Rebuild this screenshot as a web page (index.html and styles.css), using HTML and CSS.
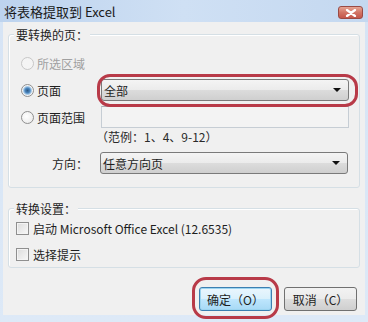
FILE: index.html
```html
<!DOCTYPE html>
<html lang="zh">
<head>
<meta charset="utf-8">
<link rel="stylesheet" href="styles.css">
</head>
<body>
<div class="window">
  <div class="titlebar">
    <span class="title">将表格提取到 Excel</span>
    <span class="close"><svg width="12" height="8" viewBox="0 0 12 8"><path d="M2 1 L10 7 M10 1 L2 7" stroke="#fff" stroke-width="2.2" stroke-linecap="round"/></svg></span>
  </div>
  <div class="client">
    <div class="group g1">
      <div class="legend">要转换的页：</div>
      <div class="row r1">
        <span class="radio disabled"></span><span class="lbl dim">所选区域</span>
      </div>
      <div class="row r2">
        <span class="radio checked"></span><span class="lbl w-lbl">页面</span>
        <div class="select hl"><span>全部</span><span class="arrow"></span></div>
      </div>
      <div class="row r3">
        <span class="radio"></span><span class="lbl w-lbl">页面范围</span>
        <div class="input"></div>
      </div>
      <div class="row r4"><span class="example">（范例：1、4、9-12）</span></div>
      <div class="row r5">
        <span class="dir-lbl">方向：</span>
        <div class="select"><span>任意方向页</span><span class="arrow"></span></div>
      </div>
    </div>
    <div class="group g2">
      <div class="legend">转换设置：</div>
      <div class="row c1"><span class="check"></span><span class="lbl">启动 Microsoft Office Excel (12.6535)</span></div>
      <div class="row c2"><span class="check"></span><span class="lbl">选择提示</span></div>
    </div>
    <div class="buttons">
      <div class="btn ok hl2">确定（O）</div>
      <div class="btn">取消（C）</div>
    </div>
  </div>
</div>
</body>
</html>
```
FILE: styles.css
```css
html, body { margin: 0; padding: 0; }
body {
  width: 368px; height: 322px; overflow: hidden;
  font-family: "Microsoft YaHei", "Noto Sans CJK SC", "Noto Sans", sans-serif;
  font-size: 12px; color: #1e1e1e;
}
.window {
  width: 368px; height: 322px;
  background: linear-gradient(to bottom, #c3d7ef 0px, #d6e4f5 22px, #dde9f7 100%);
  display: flex; flex-direction: column;
  box-sizing: border-box;
}
.titlebar {
  height: 22px; flex: none;
  display: flex; align-items: flex-start; justify-content: space-between;
  padding: 0 5px 0 4px;
  background: linear-gradient(to right, #bdd3ee 0%, #cfe0f4 50%, #c4d8f0 100%);
}
.title { font-size: 13px; color: #1a1a1a; line-height: 24px; }
.close {
  width: 25px; height: 13px; margin-top: 6px;
  border-radius: 3px; border: 1px solid #9a4a44;
  background: linear-gradient(to bottom, #e6a494 0%, #d27565 50%, #c4564a 100%);
  display: flex; align-items: center; justify-content: center;
  box-sizing: border-box;
}
.client {
  margin: 0 3px 7px 3px; flex: 1;
  background: #f0f0f0;
  padding: 12px 5px 0 5px;
  display: flex; flex-direction: column;
}
.group {
  position: relative;
  border: 1px solid #d5dfe5;
  border-radius: 3px;
  box-shadow: inset 1px 1px 0 #fff;
  display: flex; flex-direction: column;
}
.g1 { height: 154px; padding: 0 0 0 9px; box-sizing: border-box; }
.g2 { height: 60px; margin-top: 20px; padding: 0 0 0 7px; box-sizing: border-box; }
.legend {
  position: absolute; left: 5px; top: -9px;
  background: #f0f0f0; padding: 0 2px; line-height: 17px;
  font-size: 12px;
}
.row { display: flex; align-items: center; }
.r1 { margin-top: 19px; height: 18px; }
.r2 { margin-top: 7px; height: 22px; }
.r3 { margin-top: 5px; height: 22px; }
.r4 { height: 16px; padding-left: 78px; margin-top: 0px; }
.r5 { margin-top: 8px; height: 22px; }
.lbl { margin-left: 3px; }
.dim { color: #a0a0a0; }
.w-lbl { width: 64px; }
.radio {
  width: 11px; height: 11px; border-radius: 50%;
  border: 1px solid #8f8f8f; background: radial-gradient(circle at 40% 40%, #fff, #e6e6e6);
  flex: none; box-sizing: content-box; margin-left: 3px;
}
.radio.disabled { border-color: #c7c7c7; background: #f4f4f4; }
.radio.checked { background: radial-gradient(circle, #2d5a86 0px, #4d88c0 2.5px, #a9cbe8 4px, #f4f4f4 5px); }
.select {
  width: 248px; height: 22px; box-sizing: border-box;
  border: 1px solid #7a7a7a; border-radius: 3px;
  background: linear-gradient(to bottom, #f4f4f4 0%, #ebebeb 50%, #dcdcdc 51%, #cfcfcf 100%);
  display: flex; align-items: center; justify-content: space-between;
  padding: 0 7px 0 2px; position: relative;
}
.arrow {
  width: 0; height: 0;
  border-left: 4px solid transparent; border-right: 4px solid transparent;
  border-top: 4px solid #111;
}
.hl::after {
  content: ""; position: absolute;
  left: -5px; right: -10px; top: -6px; bottom: -7px;
  border: 3px solid #b83a48; border-radius: 13px;
}
.input {
  width: 248px; height: 22px; box-sizing: border-box;
  border: 1px solid #c6cdd4; border-top-color: #a9afb6; background: #f3f3f3;
}
.example { color: #2a2a2a; margin-left: 0; }
.dir-lbl { width: 82px; padding-left: 34px; box-sizing: border-box; flex: none; }
.c1 { margin-top: 10px; height: 18px; }
.c2 { margin-top: 8px; height: 18px; }
.check {
  width: 11px; height: 11px; flex: none;
  border: 1px solid #8f8f8f;
  background: linear-gradient(135deg, #dcdcdc, #f8f8f8);
  box-shadow: inset 0 0 0 1px #f4f4f4;
}
.c1 .lbl, .c2 .lbl { margin-left: 4px; }
.buttons {
  display: flex; justify-content: flex-end; gap: 12px;
  margin-top: 19px; padding-right: 3px;
}
.btn {
  width: 73px; height: 24px; box-sizing: border-box;
  border: 1px solid #707070; border-radius: 3px;
  background: linear-gradient(to bottom, #f2f2f2 0%, #ebebeb 50%, #dddddd 51%, #cfcfcf 100%);
  display: flex; align-items: center; justify-content: center;
  position: relative;
}
.btn.ok {
  border-color: #3c7fb1;
  background: linear-gradient(to bottom, #eaf6fd 0%, #d9f0fc 50%, #bee6fd 51%, #a7d9f5 100%);
  box-shadow: inset 0 0 0 1px #9bd4f0;
}
.hl2::after {
  content: ""; position: absolute;
  left: -8px; right: -8px; top: -11px; bottom: -9px;
  border: 3px solid #b83a48; border-radius: 14px;
}
```
